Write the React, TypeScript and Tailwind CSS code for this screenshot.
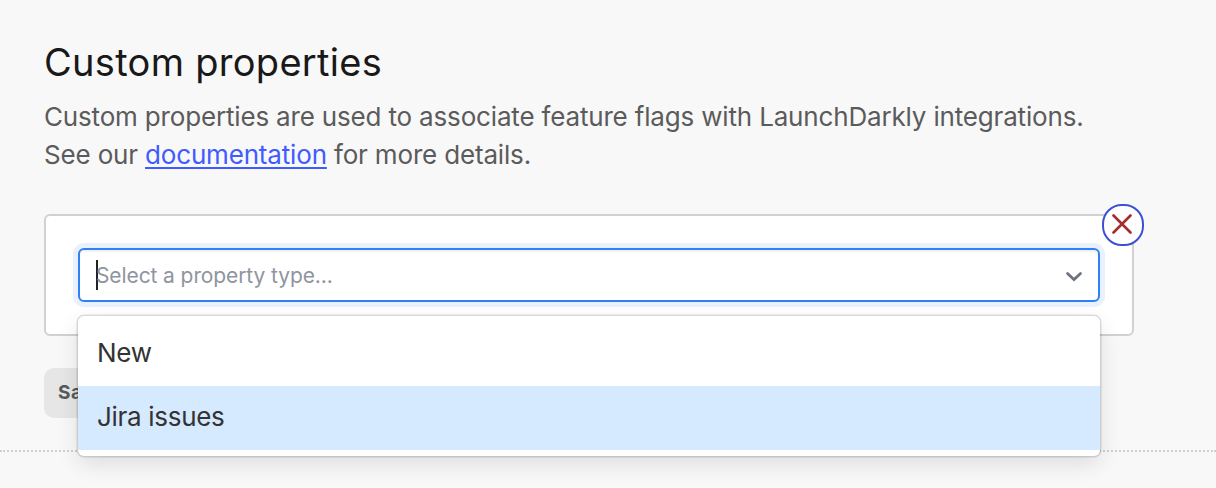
const options = ["New", "Jira issues"];

function Chevron() {
  return (
    <svg width="18" height="12" viewBox="0 0 18 12" fill="none" className="mt-[3px] shrink-0">
      <path d="M2.5 2.5 9 8.6 15.5 2.5" stroke="#6c727e" strokeWidth="2.7" strokeLinecap="round" />
    </svg>
  );
}

function RemoveButton() {
  return (
    <button
      aria-label="Remove property"
      className="absolute -top-[12px] -right-[12px] flex h-[42px] w-[42px] items-center justify-center rounded-[20px] border-2 border-[#3b50d5] bg-white"
    >
      <svg width="20" height="20" viewBox="0 0 20 20" fill="none" className="relative -left-px -top-px">
        <path d="M1.5 1.5 18.5 18.5M18.5 1.5 1.5 18.5" stroke="#a52d2d" strokeWidth="2.6" strokeLinecap="round" />
      </svg>
    </button>
  );
}

function PropertySelect() {
  return (
    <div className="relative">
      <div className="flex h-[54px] items-center justify-between rounded-[6px] border-2 border-[#2f7ff5] bg-white pr-[15px] pl-4 shadow-[0_0_0_5px_#eaf1fe,inset_0_2px_2px_rgba(0,0,0,0.06)]">
        <div className="flex items-center">
          <span className="h-[30px] w-[2px] bg-[#222]" />
          <span className="-ml-[2px] pt-px text-[21px] leading-[30px] tracking-[-0.1px] text-[#8f949f]">
            Select a property type...
          </span>
        </div>
        <Chevron />
      </div>
      <ul className="absolute top-[68px] right-0 left-0 z-10 rounded-[6px] bg-white py-[6px] shadow-[0_0_0_1.5px_rgba(0,0,0,0.13),0_8px_22px_rgba(0,0,0,0.11)]">
        {options.map((option) => (
          <li
            key={option}
            className="flex h-16 items-center px-[19px] pb-[2px] text-[26px] leading-[38px] tracking-[-0.3px] text-[#333] last:bg-[#d5e9ff]"
          >
            {option}
          </li>
        ))}
      </ul>
    </div>
  );
}

export default function App() {
  return (
    <main className="h-[488px] overflow-hidden bg-[#f8f8f8] font-['Inter',sans-serif]">
      <section className="h-[452px] border-b-2 border-dotted border-[#cfcfcf] px-[44px] pt-[38px]">
        <h2 className="text-[38px] leading-[48px] tracking-[0.3px] text-[#191919]">Custom properties</h2>
        <p className="mt-[12px] text-[26px] leading-[38px] tracking-[-0.17px] whitespace-nowrap text-[#5b5b5b]">
          Custom properties are used to associate feature flags with LaunchDarkly integrations.
          <br />
          See our{" "}
          <a href="#" className="text-[#405bff] underline decoration-2 underline-offset-[3px]">
            documentation
          </a>{" "}
          for more details.
        </p>
        <div className="relative mt-[40px] h-[122px] w-[1090px] rounded-[6px] border-2 border-[#d1d1d1] bg-white p-8">
          <PropertySelect />
          <RemoveButton />
        </div>
        <button className="mt-8 block h-[50px] rounded-[10px] bg-[#e6e6e6] px-[14px] text-[19px] font-bold tracking-[0.5px] text-[#58595b]">
          Save
        </button>
      </section>
    </main>
  );
}
